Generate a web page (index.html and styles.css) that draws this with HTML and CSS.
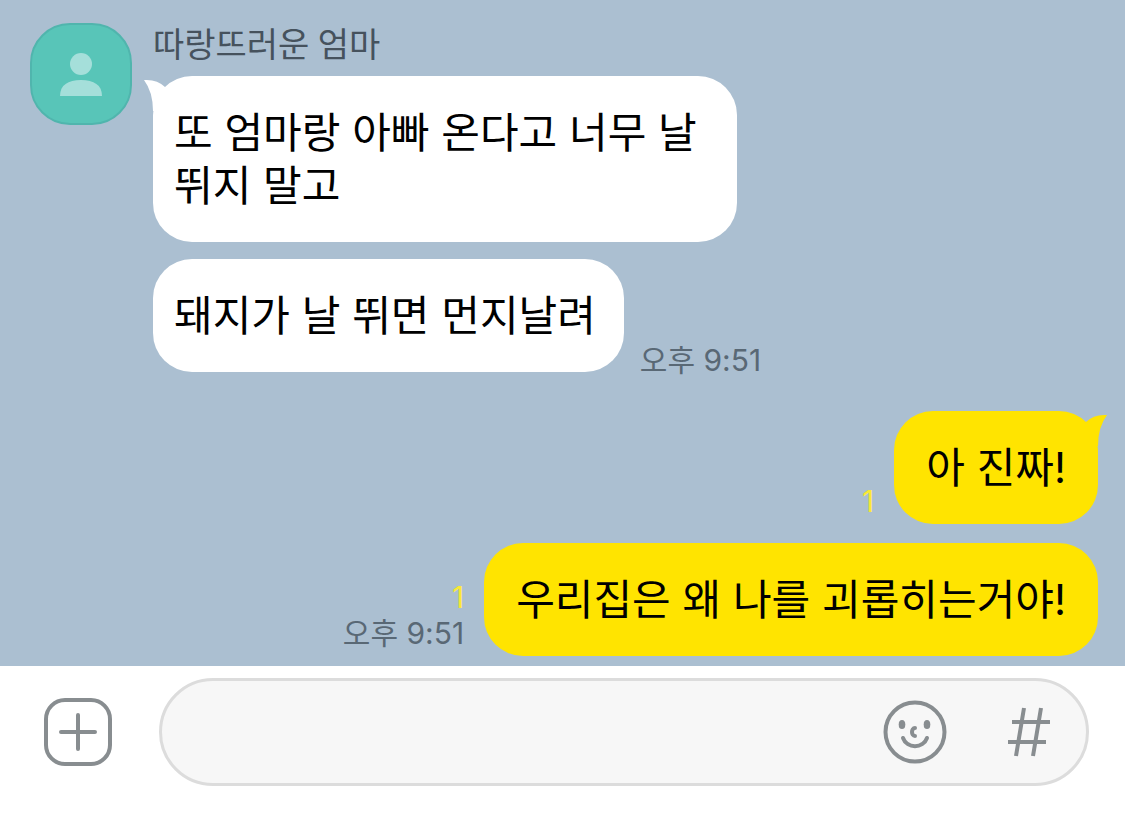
FILE: index.html
```html
<!DOCTYPE html>
<html lang="ko">
<head>
    <meta charset="UTF-8">
    <meta name="viewport" content="width=device-width, initial-scale=1">
    <title>따랑뜨러운 엄마</title>
    <link rel="stylesheet" href="styles.css">
</head>
<body>
<main class="chat">
    <section class="received">
        <svg class="avatar" viewBox="0 0 102 102" aria-hidden="true">
            <rect x="1" y="1" width="100" height="100" rx="39" fill="#58c5b8" stroke="#50b5ad" stroke-width="2"/>
            <circle cx="51" cy="41" r="11" fill="#a5dfda"/>
            <path d="M30 73C30 62 38 57 51 57S72 62 72 73Z" fill="#a5dfda"/>
        </svg>
        <div class="messages">
            <h1 class="name">따랑뜨러운 엄마</h1>
            <div class="row">
                <p class="bubble">또 엄마랑 아빠 온다고 너무 날뛰지 말고
                    <svg class="tail" viewBox="0 0 32 32" aria-hidden="true"><path d="M1 1Q14 0 22 8L32 32H10Q10 13 1 1Z"/></svg>
                </p>
            </div>
            <div class="row">
                <p class="bubble">돼지가 날 뛰면 먼지날려</p>
                <div class="info"><time>오후 9:51</time></div>
            </div>
        </div>
    </section>
    <section class="sent">
        <div class="row">
            <div class="info"><span class="unread">1</span></div>
            <p class="bubble">아 진짜!
                <svg class="tail" viewBox="0 0 32 32" aria-hidden="true"><path d="M31 1Q18 0 10 8L0 32H22Q22 13 31 1Z"/></svg>
            </p>
        </div>
        <div class="row">
            <div class="info"><span class="unread">1</span><time>오후 9:51</time></div>
            <p class="bubble">우리집은 왜 나를 괴롭히는거야!</p>
        </div>
    </section>
</main>
<form class="composer">
    <button type="button" class="btn" aria-label="추가">
        <svg width="68" height="68" viewBox="0 0 68 68">
            <rect x="2" y="2" width="64" height="64" rx="19"/>
            <path d="M34 17V51M17 34H51" stroke-linecap="round"/>
        </svg>
    </button>
    <div class="field">
        <input type="text" class="text" aria-label="메시지 입력">
        <button type="button" class="btn" aria-label="이모티콘">
            <svg width="64" height="64" viewBox="0 0 64 64">
                <circle cx="32" cy="32" r="29.5"/>
                <path d="M20 38C24 49 40 49 44 38" stroke-linecap="round"/>
                <path d="M32 28C28 28 28 36 32 36" stroke-linecap="round"/>
                <ellipse class="eye" cx="19" cy="24.500" rx="3.300" ry="4.600"/>
                <ellipse class="eye" cx="44" cy="24.500" rx="3.300" ry="4.600"/>
            </svg>
        </button>
        <button type="button" class="btn" aria-label="샵검색">
            <svg width="44" height="50" viewBox="0 0 44 50">
                <path d="M17 1L9 49M34 1L26 49M5 15H43M1 35H39"/>
            </svg>
        </button>
    </div>
</form>
</body>
</html>
```
FILE: styles.css
```css
*{
    margin: 0;
    padding: 0;
    box-sizing: border-box;
}
body{
    display: flex;
    flex-direction: column;
    min-height: 100vh;
    background: #fff;
    font-family: Inter, "Noto Sans CJK KR", sans-serif;
}
.chat{
    flex: 1;
    padding: 23px 27px 9px 30px;
    background: #abbfd1;
}
.received{
    display: flex;
    align-items: flex-start;
    gap: 21px;
}
.avatar{
    flex: none;
    width: 102px;
    height: 102px;
}
.messages{
    flex: 1;
}
.name{
    margin-bottom: 9px;
    font-family: Roboto, "Noto Sans CJK KR", sans-serif;
    font-size: 34px;
    line-height: 44px;
    font-weight: 400;
    color: #46525d;
}
.row{
    display: flex;
    align-items: flex-end;
    gap: 16px;
}
.row + .row{
    margin-top: 17px;
}
.bubble{
    position: relative;
    max-width: 584px;
    padding: 30px 28px 30px 21px;
    border-radius: 39px;
    background: #fff;
    color: #000;
    font-size: 42px;
    line-height: 53px;
    word-break: break-all;
}
.tail{
    position: absolute;
    top: 3px;
    left: -10px;
    width: 32px;
    height: 32px;
    fill: #fff;
}
.info{
    display: flex;
    flex-direction: column;
    font-size: 30px;
    line-height: 24px;
    color: #596875;
    white-space: nowrap;
}
.unread{
    color: #f9e935;
}
.sent{
    margin-top: 39px;
}
.sent .row{
    justify-content: flex-end;
    gap: 20px;
}
.sent .row + .row{
    margin-top: 19px;
}
.sent .bubble{
    max-width: 640px;
    padding: 30px 32px;
    background: #ffe400;
}
.sent .tail{
    left: auto;
    right: -10px;
    fill: #ffe400;
}
.sent .info{
    align-items: flex-end;
    padding-bottom: 5px;
    line-height: 36px;
}
.composer{
    display: flex;
    align-items: center;
    gap: 47px;
    padding: 12px 36px 32px 44px;
}
.btn{
    flex: none;
    border: 0;
    background: none;
    cursor: pointer;
}
.btn svg{
    display: block;
    fill: none;
    stroke: #888d90;
    stroke-width: 4;
}
.btn .eye{
    fill: #888d90;
    stroke: none;
}
.field{
    flex: 1;
    min-width: 0;
    display: flex;
    align-items: center;
    gap: 60px;
    height: 108px;
    padding: 0 35px;
    border: 3px solid #dcdcdc;
    border-radius: 54px;
    background: #f7f7f7;
}
.text{
    flex: 1;
    min-width: 0;
    height: 60px;
    border: 0;
    outline: 0;
    background: none;
    font-family: inherit;
    font-size: 42px;
}
```
